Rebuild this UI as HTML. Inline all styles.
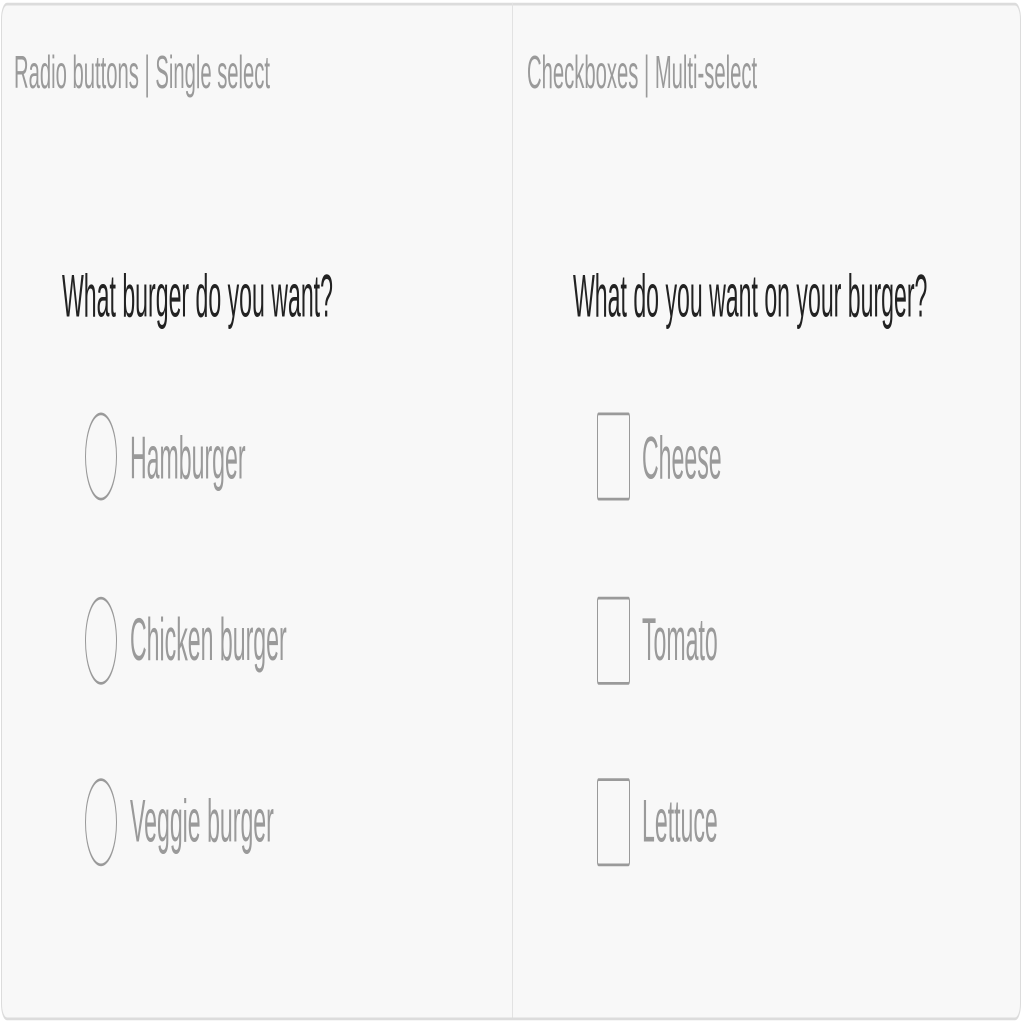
<!DOCTYPE html>
<html><head><meta charset="utf-8"><style>
html,body{margin:0;padding:0;background:#fff;width:1024px;height:1024px;overflow:hidden}
#s{position:absolute;left:0;top:0;width:1024px;height:372.4px;transform:scaleY(2.75);transform-origin:0 0;font-family:"Liberation Sans",sans-serif}
.box{position:absolute;left:1px;top:0.6px;width:1020px;height:370.5px;border:1px solid #dcdcdc;border-radius:6px;background:#f8f8f8;box-sizing:border-box}
.div{position:absolute;left:512px;top:1px;width:1px;height:369px;background:#e2e2e2}
.t{position:absolute;white-space:nowrap;line-height:1;transform-origin:0 0}
.h{font-size:17px;color:#9a9a9a;transform:scaleX(1.19)}
.q{font-size:22px;color:#222;transform:scaleX(1.05)}
.o{font-size:22px;color:#9a9a9a;transform:scaleX(1.05)}
.r{position:absolute;width:32px;height:32px;border:1.3px solid #9a9a9a;border-radius:50%;box-sizing:border-box}
.c{position:absolute;width:33px;height:32px;border:1.5px solid #9a9a9a;border-radius:1.5px;box-sizing:border-box}
</style></head><body><div id="s">
<div class="box"></div><div class="div"></div>
<div class="t h" style="left:14px;top:18px">Radio buttons | Single select</div>
<div class="t h" style="left:527px;top:18px">Checkboxes | Multi-select</div>
<div class="t q" style="left:62px;top:97px">What burger do you want?</div>
<div class="t q" style="left:573px;top:97px">What do you want on your burger?</div>
<div class="r" style="left:85px;top:150px"></div><div class="t o" style="left:130px;top:156px">Hamburger</div>
<div class="r" style="left:85px;top:217px"></div><div class="t o" style="left:130px;top:222px">Chicken burger</div>
<div class="r" style="left:85px;top:283px"></div><div class="t o" style="left:130px;top:288px">Veggie burger</div>
<div class="c" style="left:597px;top:150px"></div><div class="t o" style="left:642px;top:156px">Cheese</div>
<div class="c" style="left:597px;top:217px"></div><div class="t o" style="left:642px;top:222px">Tomato</div>
<div class="c" style="left:597px;top:283px"></div><div class="t o" style="left:642px;top:288px">Lettuce</div>
</div></body></html>
